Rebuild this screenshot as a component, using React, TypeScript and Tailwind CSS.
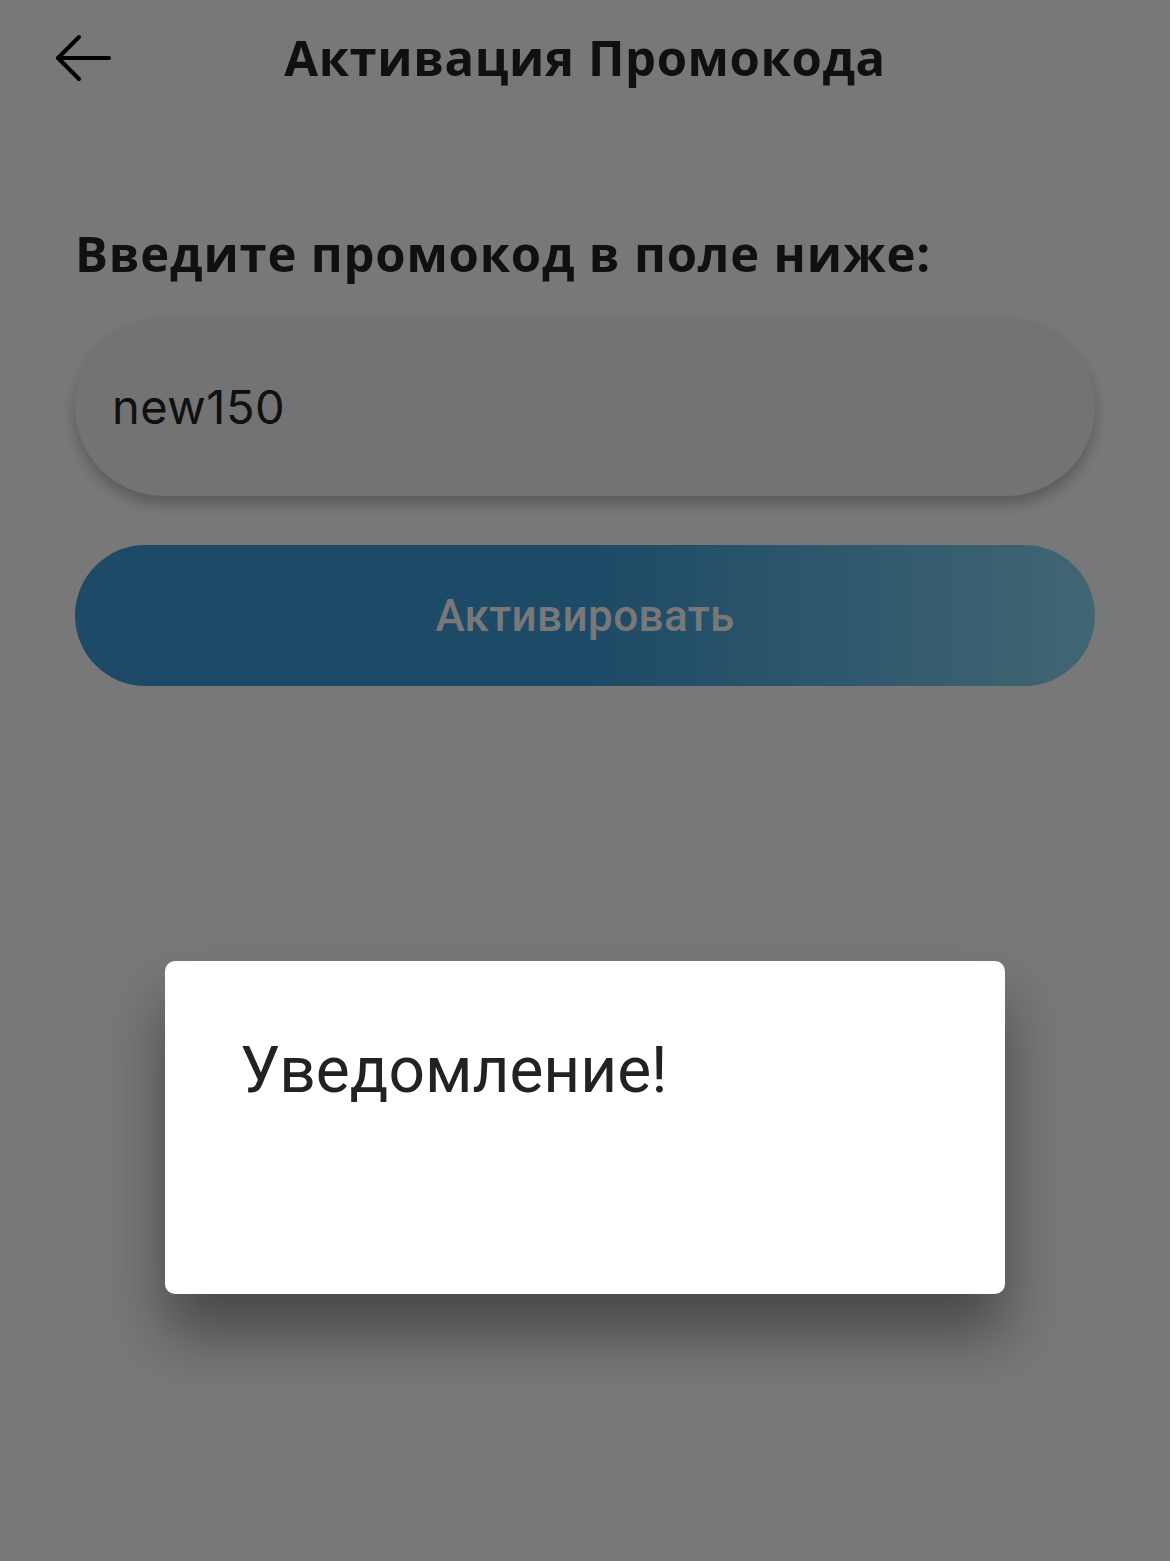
// Promo code activation screen, with the notification dialog open on top
export default function App() {
  return (
    <div className="relative min-h-[1561px] w-full bg-white font-['Open_Sans',sans-serif] text-[#222]">
      {/* Header */}
      <div className="relative flex h-[118px] items-center justify-center">
        <button className="absolute left-[54px] top-[32px] text-black">
          <svg width="60" height="52" viewBox="0 0 60 52" fill="none" stroke="currentColor" strokeWidth={4} strokeLinecap="round" strokeLinejoin="round">
            <path d="M4 26H55" />
            <path d="M25 5L4 26L25 47" />
          </svg>
        </button>
        <h1 className="text-[49px] font-bold tracking-[0.6px] pb-[2px]">Активация Промокода</h1>
      </div>

      {/* Form */}
      <div className="px-[75px] pt-[100px]">
        <p className="text-[49px] font-bold tracking-[0.8px] leading-[70px]">Введите промокод в поле ниже:</p>
        <div className="mt-[30px] flex h-[178px] items-center rounded-full bg-[#f4f4f4] px-[37px] shadow-[0_8px_14px_rgba(0,0,0,0.25)]">
          <span className="font-['Inter',sans-serif] text-[47px] text-[#222] tracking-[0.5px]">new150</span>
        </div>
        <button className="mt-[49px] flex h-[141px] w-full items-center justify-center rounded-full bg-[linear-gradient(90deg,#3e9dd9_0%,#3e9dd9_50%,#8cd8f4_100%)]">
          <span className="font-['Roboto',sans-serif] text-[44px] font-medium tracking-[0.4px] text-white">Активировать</span>
        </button>
      </div>

      {/* Overlay */}
      <div className="absolute inset-0 bg-black/[0.53]" />

      {/* Dialog */}
      <div className="absolute left-[165px] top-[961px] h-[333px] w-[840px] rounded-[10px] bg-white px-[75px] pt-[70px] shadow-[0_40px_60px_rgba(0,0,0,0.4)]">
        <p className="font-['Roboto',sans-serif] text-[64px] text-[#222] leading-[80px]">Уведомление!</p>
      </div>
    </div>
  );
}
